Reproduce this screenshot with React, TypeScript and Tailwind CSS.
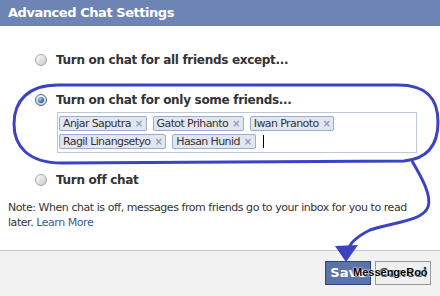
import React from 'react';

/* ── data ── */
const friends = [
  ['Anjar Saputra', 'Gatot Prihanto', 'Iwan Pranoto'],
  ['Ragil Linangsetyo', 'Hasan Hunid'],
];

function Radio({ checked }: { checked?: boolean }) {
  if (checked) {
    return (
      <span className="flex h-[12px] w-[12px] items-center justify-center rounded-full border border-[#555f6e] bg-gradient-to-b from-[#f4f6f8] to-[#c9d1da]">
        <span className="h-[6px] w-[6px] rounded-full bg-[radial-gradient(circle_at_35%_35%,#9fd2ff,#1f5fa8_70%)]" />
      </span>
    );
  }
  return (
    <span className="h-[12px] w-[12px] rounded-full border border-[#a6a6a6] bg-gradient-to-br from-[#ffffff] to-[#c8c8c8]" />
  );
}

function Option({ label, checked }: { label: string; checked?: boolean }) {
  return (
    <div className="flex h-[16px] items-center pl-[35px]">
      <Radio checked={checked} />
      <span className="ml-[9px] text-[12px] font-bold tracking-[-0.3px] text-[#333333]">{label}</span>
    </div>
  );
}

function Token({ name }: { name: string }) {
  return (
    <span className="mr-[6px] flex h-[15px] items-center rounded-[2px] border border-[#9dacc9] bg-[#e2e6f0] pl-[3px] pr-[3px] text-[11px] leading-none tracking-[-0.6px] text-[#333333]">
      {name}
      <span className="ml-[4px] text-[10px] font-bold text-[#8e9bb8]">×</span>
    </span>
  );
}

/* ── hand-drawn annotation on top ── */
function Annotation() {
  return (
    <svg className="pointer-events-none absolute left-0 top-0" width="440" height="296" viewBox="0 0 440 296">
      <path
        d="M 58 85 L 398 85 C 428 85 438 100 438 122 C 438 146 426 159 404 161 L 62 163 C 28 163 14 146 14 124 C 14 101 28 85 58 85 Z"
        fill="none"
        stroke="#3b43c4"
        strokeWidth="3"
      />
      <path
        d="M 412 161 C 422 178 432 196 428 207 C 422 222 392 222 370 230 C 358 236 350 242 348 250"
        fill="none"
        stroke="#3b43c4"
        strokeWidth="3"
      />
      <polygon points="335,246 358,245 346,262" fill="#3b43c4" />
    </svg>
  );
}

export default function App() {
  return (
    <div className="relative h-[296px] w-[440px] overflow-hidden bg-white" style={{ fontFamily: '"DejaVu Sans", Verdana, sans-serif' }}>
      {/* header */}
      <div className="flex h-[26px] items-center bg-[#6d84b4] pl-[8px] text-[13px] font-bold tracking-[-0.45px] text-white">
        Advanced Chat Settings
      </div>

      {/* body */}
      <div className="flex flex-col">
        <div className="mt-[26px]">
          <Option label="Turn on chat for all friends except..." />
        </div>
        <div className="mt-[24px]">
          <Option label="Turn on chat for only some friends..." checked />
        </div>
        <div className="ml-[57px] mt-[4px] flex h-[41px] w-[360px] flex-col gap-[3px] border border-[#bdc7d8] pl-[1px] pt-[3px]">
          {friends.map((row, i) => (
            <div key={i} className="flex items-center">
              {row.map((n) => (
                <Token key={n} name={n} />
              ))}
              {i === 1 && <span className="ml-[1px] h-[13px] w-[1px] bg-black" />}
            </div>
          ))}
        </div>
        <div className="mt-[19px]">
          <Option label="Turn off chat" />
        </div>
        <p className="mt-[12px] px-[8px] text-[11px] leading-[15px] tracking-[-0.45px] text-[#333333]">
          Note: When chat is off, messages from friends go to your inbox for you to read later.{' '}
          <span className="text-[#3b5998]">Learn More</span>
        </p>
      </div>

      {/* footer */}
      <div className="absolute bottom-0 left-0 right-0 flex h-[46px] justify-end gap-[4px] border-t border-[#c9c9c9] bg-[#f2f2f2] pr-[9px] pt-[10px]">
        <button className="flex h-[24px] w-[46px] items-center justify-center border border-[#29447e] bg-[#5b74a8] text-[13px] font-bold text-white">
          Save
        </button>
        <button className="flex h-[24px] w-[56px] items-center justify-center border border-[#999999] bg-[#f0f0f0] text-[13px] font-bold text-[#333333]">
          Cancel
        </button>
      </div>

      <span
        className="absolute left-[353px] top-[267px] text-[11px] font-bold leading-none text-black [text-shadow:0_0_2px_#fff,0_0_2px_#fff]"
        style={{ fontFamily: '"Liberation Sans", Arial, sans-serif' }}
      >
        MessengeRoo
      </span>

      <Annotation />
    </div>
  );
}
